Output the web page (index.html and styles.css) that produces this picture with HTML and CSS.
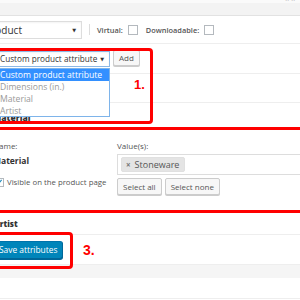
FILE: index.html
```html
<!DOCTYPE html>
<html>
<head>
<meta charset="utf-8">
<link rel="stylesheet" href="styles.css">
</head>
<body>
<div class="page">
  <div class="top-strip"><span class="toggle">⌃⌃</span></div>
  <div class="pd-head">
    <div class="select type-select"><span>Simple product</span><span class="arrow">▼</span></div>
    <span class="sep"></span>
    <label class="opt">Virtual:</label><span class="cb"></span>
    <label class="opt dl">Downloadable:</label><span class="cb"></span>
  </div>
  <div class="toolbar">
    <div class="select attr-select"><span>Custom product attribute</span><span class="arrow">▼</span></div>
    <button class="btn add">Add</button>
  </div>
  <div class="attr-head empty"></div>
  <div class="attr-head material"><strong>Material</strong></div>
  <div class="attr-body">
    <div class="col-name">
      <div class="lbl">Name:</div>
      <div class="name-val">Material</div>
      <div class="vis"><span class="cb checked"><svg viewBox="0 0 10 10" width="8" height="8"><path d="M2 5 L4 7 L8 2" fill="none" stroke="#1e8cbe" stroke-width="1.6"/></svg></span><span>Visible on the product page</span></div>
    </div>
    <div class="col-val">
      <div class="lbl">Value(s):</div>
      <div class="tokens"><span class="token"><span class="x">×</span>Stoneware</span></div>
      <div class="btns"><button class="btn">Select all</button><button class="btn">Select none</button></div>
    </div>
  </div>
  <div class="attr-head artist"><strong>Artist</strong></div>
  <div class="toolbar save-bar">
    <button class="btn primary">Save attributes</button>
  </div>
  <div class="gray-band"></div>
  <div class="bottom-row"></div>

  <ul class="dropdown">
    <li class="sel">Custom product attribute</li>
    <li>Dimensions (in.)</li>
    <li>Material</li>
    <li>Artist</li>
  </ul>

  <div class="mark m1"></div>
  <div class="mark m2"></div>
  <div class="mark m3"></div>
  <span class="num n1">1.</span>
  <span class="num n3">3.</span>
</div>
</body>
</html>
```
FILE: styles.css
```css
html, body {
  margin: 0;
  padding: 0;
  background: #fff;
}
.page {
  position: relative;
  width: 300px;
  height: 300px;
  overflow: hidden;
  font-family: "Open Sans", "DejaVu Sans", sans-serif;
  font-size: 9px;
  color: #555;
}
.top-strip {
  background: #f3f3f3;
  border-top: 3px solid #fafafa;
  border-bottom: 1px solid #e2e2e2;
  box-sizing: border-box;
  height: 16px;
  position: relative;
}
.toggle {
  position: absolute;
  right: 4px;
  top: -6px;
  font-size: 7px;
  color: #999;
}
.pd-head {
  display: flex;
  align-items: center;
  height: 28px;
  border-bottom: 1px solid #eee;
  box-sizing: border-box;
}
.select {
  display: flex;
  align-items: center;
  justify-content: space-between;
  border: 1px solid #ddd;
  box-sizing: border-box;
  background: #fff;
  color: #333;
  white-space: nowrap;
  overflow: hidden;
  box-shadow: inset 0 1px 2px rgba(0,0,0,.05);
}
.arrow {
  font-size: 5px;
  color: #333;
  margin-right: 5px;
  flex: none;
}
.type-select {
  margin-left: -52px;
  width: 134px;
  height: 18px;
  padding-left: 2px;
  font-size: 10px;
}
.sep {
  width: 1px;
  height: 11px;
  background: #ddd;
  margin-left: 7px;
}
.opt {
  margin-left: 7px;
  font-weight: 600;
  color: #555;
  font-size: 7.4px;
}
.opt.dl { margin-left: 8px; }
.cb {
  display: inline-flex;
  align-items: center;
  justify-content: center;
  width: 10px;
  height: 10px;
  border: 1px solid #b4b9be;
  box-sizing: border-box;
  margin-left: 5px;
  background: #fff;
}
.toolbar {
  display: flex;
  align-items: center;
  height: 30px;
  border-bottom: 1px solid #eee;
  box-sizing: border-box;
}
.attr-select {
  margin-left: -3px;
  width: 113px;
  height: 16px;
  padding-left: 2px;
  border-color: #8cb8e6;
  font-size: 8.2px;
}
.btn {
  font-family: "Open Sans", "DejaVu Sans", sans-serif;
  font-size: 8px;
  color: #555;
  background: #f7f7f7;
  border: 1px solid #ccc;
  border-radius: 2px;
  box-shadow: 0 1px 0 #ccc;
  padding: 0 4px;
  height: 16px;
  line-height: 14px;
  margin: 0;
}
.add {
  margin-left: 3px;
  width: 27px;
  padding: 0;
  margin-top: -2px;
}
.attr-head {
  border-bottom: 1px solid #eee;
  box-sizing: border-box;
  display: flex;
  align-items: center;
  font-weight: 700;
  color: #333;
}
.attr-head.empty { height: 29px; }
.attr-head.material { height: 25px; margin-left: -7px; padding-top: 4px; font-size: 8.5px; }
.attr-head.artist { height: 22px; margin-left: -6px; font-size: 8px; }
.attr-body {
  display: flex;
  height: 85px;
  box-sizing: border-box;
  padding-top: 13px;
}
.col-name {
  margin-left: -7px;
  width: 124px;
}
.lbl {
  height: 9px;
  line-height: 9px;
  font-size: 8px;
  color: #555;
}
.name-val {
  margin-top: 5px;
  font-weight: 700;
  color: #333;
  font-size: 8.5px;
}
.vis {
  display: flex;
  align-items: center;
  gap: 3px;
  margin-top: 11px;
  color: #555;
  font-size: 7.8px;
  white-space: nowrap;
}
.vis .cb { margin-left: 2px; width: 9px; height: 9px; }
.col-val {
  flex: 1;
}
.tokens {
  margin-top: 4px;
  height: 21px;
  border: 1px solid #ddd;
  border-right: none;
  box-sizing: border-box;
  display: flex;
  align-items: center;
  padding-left: 3px;
}
.token {
  background: #e4e4e4;
  border: 1px solid #e0e0e0;
  border-radius: 2px;
  height: 15px;
  line-height: 14px;
  box-sizing: border-box;
  padding: 0 5px 0 4px;
  color: #555;
  font-size: 9px;
}
.x { color: #777; font-size: 8px; margin-right: 4px; font-weight: 700; }
.btns {
  display: flex;
  gap: 3px;
  margin-top: 3px;
}
.btns .btn { height: 17px; padding: 0 5px; }
.save-bar { height: 29px; border-bottom: none; }
.primary {
  margin-left: -9px;
  background: #0085ba;
  border-color: #0073aa #006799 #006799;
  color: #fff;
  box-shadow: 0 1px 0 #006799;
  height: 18px;
  padding: 0 5px 0 7px;
  font-size: 8.4px;
  border-radius: 3px;
}
.gray-band {
  height: 14px;
  background: #f5f5f5;
  border-top: 1px solid #eee;
  box-sizing: border-box;
}
.bottom-row {
  height: 21px;
  border-bottom: 1px solid #eee;
  box-sizing: border-box;
}
.dropdown {
  position: absolute;
  left: -4px;
  top: 68px;
  width: 114px;
  height: 49px;
  margin: 0;
  padding: 0;
  list-style: none;
  border: 1px solid #7eb4ea;
  box-sizing: border-box;
  background: #fff;
  font-size: 8.6px;
}
.dropdown li {
  height: 12px;
  line-height: 12px;
  padding-left: 3px;
  color: #999;
  white-space: nowrap;
}
.dropdown li.sel {
  background: #3390ff;
  color: #fff;
}
.mark {
  position: absolute;
  border: 3px solid #f00;
  border-radius: 4px;
  box-sizing: border-box;
}
.m1 { left: -10px; top: 48px; width: 163px; height: 76px; }
.m2 { left: -10px; top: 127px; width: 320px; height: 86px; }
.m3 { left: -10px; top: 232px; width: 83px; height: 37px; }
.num {
  position: absolute;
  color: #f00;
  font-family: "Liberation Sans", Arial, sans-serif;
  font-weight: 700;
  font-size: 13px;
  line-height: 1;
}
.n1 { left: 134px; top: 78px; }
.n3 { left: 83px; top: 243px; font-size: 14px; }
```
